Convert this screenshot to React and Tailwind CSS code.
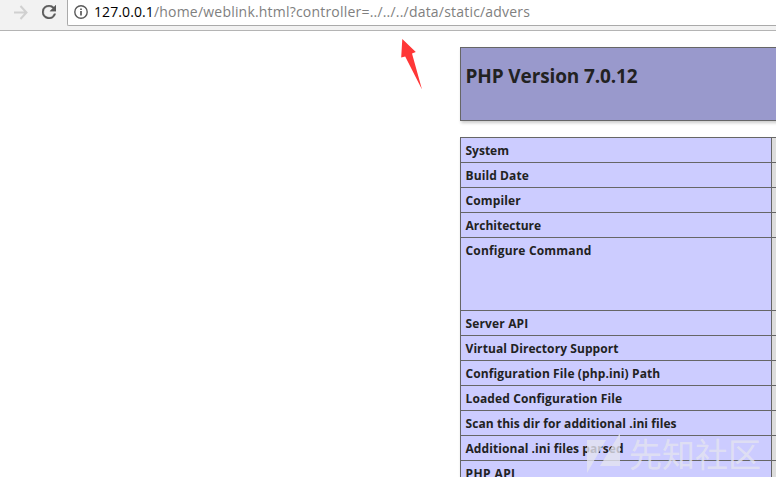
const rows = [
  { label: "System", h: "h-[25px]", sp: "tracking-normal" },
  { label: "Build Date", h: "h-[25px]", sp: "tracking-[0.1px]" },
  { label: "Compiler", h: "h-[25px]", sp: "tracking-[0.12px]" },
  { label: "Architecture", h: "h-[25px]", sp: "tracking-normal" },
  { label: "Configure Command", h: "h-[73px]", sp: "tracking-[0.18px]" },
  { label: "Server API", h: "h-[25px]", sp: "tracking-[0.15px]" },
  { label: "Virtual Directory Support", h: "h-[25px]", sp: "tracking-[0.08px]" },
  { label: "Configuration File (php.ini) Path", h: "h-[25px]", sp: "tracking-[0.12px]" },
  { label: "Loaded Configuration File", h: "h-[25px]", sp: "tracking-[0.12px]" },
  { label: "Scan this dir for additional .ini files", h: "h-[25px]", sp: "tracking-[0.07px]" },
  { label: "Additional .ini files parsed", h: "h-[25px]", sp: "tracking-[0.07px]" },
  { label: "PHP API", h: "h-[25px]", sp: "tracking-[0.4px]" },
];

function Toolbar() {
  return (
    <header className="flex h-[31px] border-b border-[#b4b4b4] bg-[#f2f2f2]">
      <svg className="mt-[5px] ml-[14px] h-[15px] w-[14px] shrink-0" viewBox="0 0 14 15" fill="none" stroke="#d0d0d0" strokeWidth="2">
        <path d="M0 7.5h12.5M6.5 1l6 6.5-6 6.5" />
      </svg>
      <svg className="mt-[5px] ml-[14px] h-[14px] w-[14px] shrink-0" viewBox="4 4 16 16" fill="#5a5a5a" stroke="#5a5a5a" strokeWidth="0.4">
        <path d="M17.65 6.35A7.96 7.96 0 0 0 12 4a8 8 0 1 0 7.73 10h-2.08A6 6 0 1 1 12 6c1.66 0 3.14.69 4.22 1.78L13 11h7V4z" />
      </svg>
      <div className="ml-[11px] flex h-[26px] flex-1 rounded-bl-[2px] border-b border-l border-[#aaaaaa] bg-white">
        <svg className="mt-[5px] ml-[6px] h-[14px] w-[14px] shrink-0" viewBox="0 0 14 14" fill="none" stroke="#5a5a5a">
          <circle cx="7" cy="7" r="6.2" strokeWidth="1.4" />
          <path d="M7 6v4.5M7 3.5v1.6" strokeWidth="1.7" />
        </svg>
        <p className="mt-[2px] ml-[6px] whitespace-nowrap font-['Open_Sans','Noto_Sans',sans-serif] text-[14px] leading-[20px] text-[#808080]">
          <span className="tracking-[0.1px] text-black">127.0.0.1</span>
          <span className="tracking-[0.2px]">/home/weblink.html?controller=../../../data/static/advers</span>
        </p>
      </div>
    </header>
  );
}

function Watermark() {
  return (
    <div className="absolute top-[432px] left-[586px] flex text-[#e4e4f0]/80">
      <svg className="h-[42px] w-[36px]" viewBox="0 0 36 42" fill="currentColor">
        <path d="M1 8h19L1 41zM34 1v33H14z" />
      </svg>
      <span className="ml-[7px] whitespace-nowrap font-['Noto_Sans_CJK_SC',sans-serif] text-[33px] leading-[42px]">先知社区</span>
    </div>
  );
}

export default function App() {
  return (
    <div className="relative h-[477px] w-[776px] overflow-hidden bg-white font-['Open_Sans','Noto_Sans',sans-serif] text-[#222222]">
      <Toolbar />
      <main className="mt-[16px] ml-[460px]">
        <div className="h-[74px] w-[330px] border border-[#666666] bg-[#9999cc] pt-[15px] pl-[4.5px] shadow-[1px_2px_3px_#cccccc]">
          <h1 className="whitespace-nowrap text-[19px] leading-[26px] font-bold tracking-[-0.12px]">PHP Version 7.0.12</h1>
        </div>
        <div className="mt-[16px] w-[330px] border-t border-l border-[#666666] shadow-[1px_2px_3px_#cccccc]">
          {rows.map((r) => (
            <div key={r.label} className={`flex border-b border-[#666666] ${r.h}`}>
              <div className="w-[311px] border-r border-[#666666] bg-[#ccccff] pt-[4px] pl-[4.5px] text-[12px] leading-[18px] font-bold">
                <span className={`whitespace-nowrap ${r.sp}`}>{r.label}</span>
              </div>
              <div className="flex-1 bg-[#dddddd]" />
            </div>
          ))}
        </div>
      </main>
      <svg className="absolute top-[38px] left-[400px] h-[53px] w-[24px]" viewBox="0 0 24 53" fill="#ff3737">
        <path d="M2.3 1L15.8 14 12 15.6 22 51.5 5.2 18.5 1.2 19.5z" />
      </svg>
      <Watermark />
    </div>
  );
}
